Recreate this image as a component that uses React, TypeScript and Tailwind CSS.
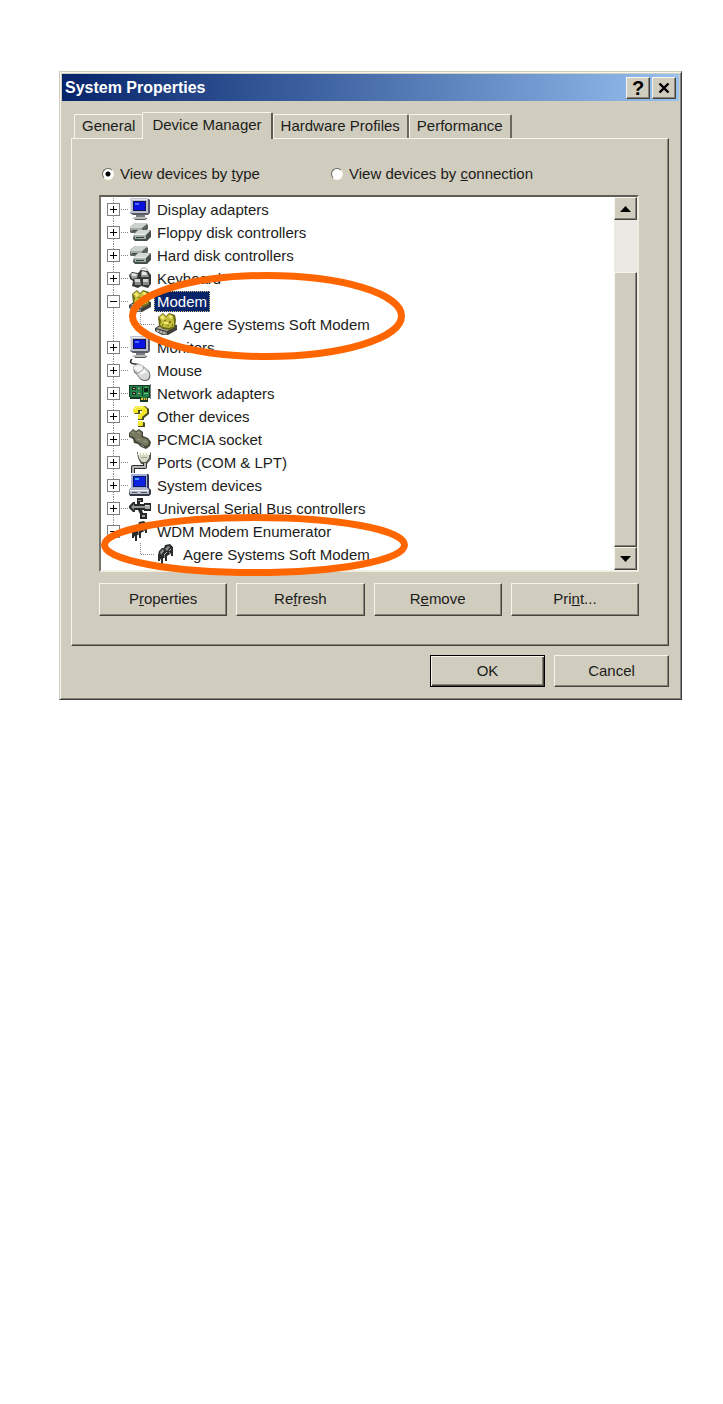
import { useState } from 'react';
import type { ReactNode } from 'react';
import clsx from 'clsx';

const raised =
  'bg-[#d0cdbf] border border-t-[#f8f6ec] border-l-[#f8f6ec] border-r-[#45433e] border-b-[#45433e] shadow-[inset_-1px_-1px_0_#868378]';

function Svg({ children }: { children: ReactNode }) {
  return (
    <svg viewBox="0 0 23 23" className="h-[23px] w-[23px] shrink-0" aria-hidden="true">
      {children}
    </svg>
  );
}

const MonitorIcon = () => (
  <Svg>
    <path d="M2 1 H20 L21 2 V15 L19 17 H4 L1 15 Z" fill="#5c5c68" />
    <path d="M1 1 L2 0 H18 L19 1 V15 H2 L1 14 Z" fill="#bcbfcd" />
    <path d="M2 1.5 H18 M1.5 2 V14" stroke="#e4e6ee" fill="none" />
    <rect x="4" y="3" width="13" height="10" fill="#15154a" />
    <rect x="5" y="4" width="11" height="8" fill="#0a12e0" />
    <path d="M6 5 H10 V7 H6 Z" fill="#4c68ff" />
    <rect x="7" y="17" width="9" height="2" fill="#7b7d83" />
    <path d="M3 20 L6 19 H16 L18 20 L16 22 H6 Z" fill="#b7bbb5" />
    <path d="M6 21.5 H16 L18 20" stroke="#555a55" fill="none" />
  </Svg>
);

const DriveIcon = () => (
  <Svg>
    <path d="M1 6 L6 2 H17 L19 4 V8 L15 12 H2 L1 11 Z" fill="#5c635f" />
    <path d="M1 6 L6 2 H17 L18 3 L13 7 H1 Z" fill="#ccd3cd" />
    <path d="M1 7 H13 V10 H2 Z" fill="#a3aca6" />
    <path d="M3 9.5 H12" stroke="#454c48" />
    <path d="M5 13 L9 9 H21 L22 10 V16 L18 20 H6 L4 18 Z" fill="#474e4a" />
    <path d="M5 13 L9 9 H20 L21 10 L17 14 H5 Z" fill="#d3d9d3" />
    <path d="M5 14 H17 V18 H6 Z" fill="#a5aea7" />
    <path d="M7 16.5 H15" stroke="#3a403c" />
    <path d="M5 13.5 H16" stroke="#eef2ee" />
    <rect x="7" y="17" width="3" height="1" fill="#5faf78" />
  </Svg>
);

const KeyboardIcon = () => (
  <Svg>
    <path d="M11 4 C12 0 18 0 19 4" stroke="#9a9a9a" fill="none" />
    <path d="M0 8 L3 5 L9 6 L12 3 L19 4 L22 8 V17 L19 21 L12 19 L9 21 L3 19 L4 14 L1 12 Z" fill="#333635" />
    <path d="M1 7 L3 6 L9 7 L8 11 L3 12 Z" fill="#9fa3a1" />
    <path d="M3 6 L8 7 L7 9 L3 9 Z" fill="#e2e4e2" />
    <path d="M12 5 L18 5 L20 10 L12 10 Z" fill="#8f9391" />
    <path d="M13 4 L17 5 L18 8 L13 8 Z" fill="#e4e6e4" />
    <path d="M5 12 L11 12 L12 18 L6 18 Z" fill="#85898a" />
    <path d="M6 12 L11 12 L11 15 L6 15 Z" fill="#d6d9d7" />
    <path d="M14 12 L20 12 L20 18 L14 18 Z" fill="#85898a" />
    <path d="M14 12 L19 12 L19 15 L14 15 Z" fill="#cdd0ce" />
  </Svg>
);

const ModemIcon = () => (
  <Svg>
    <path d="M0 15 L8 10 L22 12 V17 L13 22 H7 L0 18 Z" fill="#3f403c" />
    <path d="M1 15 L8 12 L20 14 L12 18 Z" fill="#a6a89e" />
    <path d="M1 16 L12 19 V22 L7 21 L1 18 Z" fill="#7b7d76" />
    <path d="M3 4 L8 0 L11 3 L14 0 L20 2 L21 7 L20 14 L15 17 L8 16 L4 13 Z" fill="#6b6916" />
    <path d="M4 4 L8 1 L11 4 L14 1 L18 3 L19 8 L19 13 L14 15 L8 14 L5 12 L6 8 Z" fill="#c3bd3b" />
    <path d="M5 4 L8 2 L10 5 L8 7 Z M13 3 L16 2 L18 4 L16 6 Z M9 9 H13 V11 H9 Z" fill="#efe875" />
    <path d="M9 7 H11 V8 H9 Z M14 8 H16 V10 H14 Z M7 11 H8 V13 H7 Z M12 12 H14 V13 H12 Z M17 11 H18 V13 H17 Z" fill="#7c7820" />
    <path d="M3 17 V19 M6 18 V20 M9 19 V21" stroke="#eceae4" />
  </Svg>
);

const MouseIcon = () => (
  <Svg>
    <path d="M3 0 C0 3 2 5 6 5 C9 5 10 5 10 8" stroke="#2a2a2a" strokeWidth="1.5" fill="none" />
    <path d="M4 10 C4 6 9 4 13 6 L20 12 C23 17 21 22 16 22 C12 22 10 19 8 16 L5 13 Z" fill="#5c6060" />
    <path d="M4 10 C4 6 9 4 13 6 L19 12 C22 16 20 21 16 21 C12 21 10 18 8 15 Z" fill="#d6d8d8" />
    <path d="M5 9 C6 6 10 6 12 7 L18 13 L12 16 Z" fill="#f6f6f6" />
    <path d="M7 14 C10 14 14 12 15 8" stroke="#8c8c8c" fill="none" />
  </Svg>
);

const NetworkIcon = () => (
  <Svg>
    <path d="M0 3 H22 V16 H19 V20 H11 V17 H1 V15 H0 Z" fill="#173c22" />
    <path d="M1 4 H20 V15 H18 V18 H12 V15 H1 Z" fill="#257f49" />
    <path d="M3 5 H7 V8 H3 Z M3 10 H7 V13 H3 Z" fill="#1b3325" />
    <path d="M4 6 H6 V7 H4 Z M4 11 H6 V12 H4 Z M9 6 H11 V7 H9 Z M9 11 H11 V12 H9 Z" fill="#d99c8e" />
    <path d="M13 4 H14 V14 H13 Z" fill="#143a20" />
    <path d="M15 6 H19 V10 H15 Z" fill="#14231a" />
    <path d="M16 5 H18 V6 H16 Z M15 11 H19 V12 H15 Z" fill="#6ad182" />
    <path d="M12 16 H18 V18 H12 Z" fill="#dfc83f" />
    <path d="M14.5 16 V18 M16.5 16 V18" stroke="#54601c" />
    <path d="M21.5 2 V17" stroke="#77807a" />
  </Svg>
);

const QuestionIcon = () => (
  <Svg>
    <path d="M5 8 V5 L8 1 H16 L20 4 V9 L15 13 V15 H9 V11 L14 8 V6 H11 V9 H6 Z M9 17 H15 L16 18 V22 H9 Z" fill="#4b4920" />
    <path d="M4 7 V4 L7 1 H15 L18 4 V8 L13 12 V14 H9 V10 L13 7 V5 H9 V8 H5 Z" fill="#f1e72a" />
    <path d="M9 16 H13 L14 17 V20 L13 21 H9 Z" fill="#f1e72a" />
    <path d="M5 5 L8 2 H14 M10 17 H12" stroke="#fffba4" fill="none" />
  </Svg>
);

const CardIcon = () => (
  <Svg>
    <path d="M0 5 L4 1 L7 3 L10 1 L14 4 L14 8 L19 10 L22 14 L21 18 L17 21 L12 19 L9 16 L5 15 L4 11 L0 9 Z" fill="#45463a" />
    <path d="M1 5 L4 2 L7 4 L10 2 L13 5 L12 9 L18 11 L20 14 L19 17 L16 18 L11 15 L7 13 L5 9 L1 8 Z" fill="#777a60" />
    <path d="M3 4 L5 5 M9 5 L11 4 M8 11 L12 12 M14 13 L18 14" stroke="#9a9c7e" />
    <path d="M12 17 L15 19" stroke="#98998f" />
  </Svg>
);

const PortIcon = () => (
  <Svg>
    <path d="M8 1 H21 L22 2 V8 L18 13 H12 L9 7 Z" fill="#55584f" />
    <path d="M9 2 H20 V7 L17 11 H13 L10 7 Z" fill="#d8dac6" />
    <path d="M9 1 H21 V4 H9 Z" fill="#fafbec" />
    <path d="M11 3 H12 M14 3 H15 M17 3 H18 M12 6.5 H18" stroke="#a3a58e" />
    <path d="M16 12 V16 H4 V22" stroke="#2d2d2d" strokeWidth="4" strokeLinejoin="round" fill="none" />
    <path d="M16 12 V16 H4 V22" stroke="#b5b8b2" strokeWidth="2" strokeLinejoin="round" fill="none" />
  </Svg>
);

const ComputerIcon = () => (
  <Svg>
    <path d="M3 0 H19 L20 1 V15 H3 Z" fill="#30375a" />
    <path d="M2 0 H18 V14 H2 Z" fill="#a4afd6" />
    <rect x="4" y="2" width="13" height="11" fill="#101960" />
    <rect x="5" y="3" width="11" height="9" fill="#0c23df" />
    <rect x="6" y="4" width="4" height="2" fill="#45a3ff" />
    <path d="M0 16 L2 14 H20 L22 16 V20 L20 22 H1 L0 20 Z" fill="#343746" />
    <path d="M0 16 L2 14 H19 L20 16 V20 H1 Z" fill="#b7bccd" />
    <path d="M3 18.5 H8 M12 18.5 H18" stroke="#535869" />
    <path d="M1 16.5 H20" stroke="#f1f2f6" />
  </Svg>
);

const UsbIcon = () => (
  <Svg>
    <path d="M8 1 H14 V5 H11 V7 H15 V6 H22 V14 H15 V13 H13 L14 16 H18 V22 H11 V17 L9 13 H6 V15 H4 L0 11 V9 L4 5 H6 V7 H8 Z" fill="#262928" />
    <path d="M2 10 L5 7 V9 H16 V11 H5 V13 Z" fill="#929694" />
    <rect x="16" y="8" width="5" height="4" fill="#a5a9a7" />
    <rect x="16" y="8" width="4" height="1" fill="#e3e5e3" />
    <rect x="13" y="18" width="3" height="2" fill="#a0a4a2" />
    <rect x="9" y="3" width="3" height="1" fill="#8b8f8d" />
  </Svg>
);

const ChipIcon = () => (
  <Svg>
    <path d="M3 12 L4 8 L7 5 L9 5 L10 2 L15 1 L18 4 V9 L12 13 L7 16 L3 17 Z" fill="#2b2d2c" />
    <path d="M5 9 L8 6 L9 8 L6 12 Z M10 6 L13 3 L15 4 L12 8 Z" fill="#8c908e" />
    <path d="M9 12 L12 9 M14 8 L16 6" stroke="#b5b8b6" />
    <path d="M4 13 V18 M7 14 V21 M11 12 V18 M17 7 V13" stroke="#2b2d2c" strokeWidth="2" />
    <path d="M9.5 12 V15 M14.5 9 V12" stroke="#77797a" />
  </Svg>
);

type Device = {
  name: string;
  icon: () => ReactNode;
  open?: boolean;
  child?: boolean;
  last?: boolean;
};

const devices: Device[] = [
  { name: 'Display adapters', icon: MonitorIcon },
  { name: 'Floppy disk controllers', icon: DriveIcon },
  { name: 'Hard disk controllers', icon: DriveIcon },
  { name: 'Keyboard', icon: KeyboardIcon },
  { name: 'Modem', icon: ModemIcon, open: true },
  { name: 'Agere Systems Soft Modem', icon: ModemIcon, child: true },
  { name: 'Monitors', icon: MonitorIcon },
  { name: 'Mouse', icon: MouseIcon },
  { name: 'Network adapters', icon: NetworkIcon },
  { name: 'Other devices', icon: QuestionIcon },
  { name: 'PCMCIA socket', icon: CardIcon },
  { name: 'Ports (COM & LPT)', icon: PortIcon },
  { name: 'System devices', icon: ComputerIcon },
  { name: 'Universal Serial Bus controllers', icon: UsbIcon },
  { name: 'WDM Modem Enumerator', icon: ChipIcon, open: true, last: true },
  { name: 'Agere Systems Soft Modem', icon: ChipIcon, child: true, last: true },
];

function TreeRow({ device, selected, onSelect }: { device: Device; selected: boolean; onSelect: () => void }) {
  const Icon = device.icon;
  return (
    <li className="flex h-[23px] items-center">
      {device.child ? (
        <svg width="54" height="23" className="shrink-0" stroke="#8a8a8a" strokeDasharray="1 1" aria-hidden="true">
          {!device.last && <path d="M12.5 0 V23" />}
          <path d="M39.5 0 V12 M40 11.5 H54" fill="none" />
        </svg>
      ) : (
        <button type="button" aria-label={`${device.open ? 'Collapse' : 'Expand'} ${device.name}`} className="shrink-0">
          <svg width="28" height="23" className="block" aria-hidden="true">
            <path d={device.last ? 'M12.5 0 V6' : 'M12.5 0 V23'} stroke="#8a8a8a" strokeDasharray="1 1" />
            <path d="M18 11.5 H28" stroke="#8a8a8a" strokeDasharray="1 1" />
            <rect x="6.5" y="5.5" width="12" height="12" fill="#fff" stroke="#808080" />
            <path d={device.open ? 'M9 11.5 H16' : 'M9 11.5 H16 M12.5 8 V15'} stroke="#000" />
          </svg>
        </button>
      )}
      <Icon />
      <button
        type="button"
        onClick={onSelect}
        className={clsx(
          'ml-0.5 h-[21px] px-[3px] leading-[21px] whitespace-nowrap',
          selected && 'bg-[#0a246a] text-white outline-1 -outline-offset-1 outline-dotted outline-[#d8c98a]'
        )}
      >
        {device.name}
      </button>
    </li>
  );
}

const tabs = ['General', 'Device Manager', 'Hardware Profiles', 'Performance'];

const actions = [
  { id: 'properties', label: <>P<u>r</u>operties</> },
  { id: 'refresh', label: <>Re<u>f</u>resh</> },
  { id: 'remove', label: <>R<u>e</u>move</> },
  { id: 'print', label: <>Pri<u>n</u>t...</> },
];

const radio =
  'size-3 shrink-0 appearance-none rounded-full border border-t-[#6b695f] border-l-[#6b695f] border-r-[#f8f6ec] border-b-[#f8f6ec] bg-white checked:bg-[radial-gradient(circle,#000_2px,#fff_3px)]';

export default function App() {
  const [tab, setTab] = useState('Device Manager');
  const [selected, setSelected] = useState(4);

  return (
    <main className="min-h-screen bg-white pt-[71px] pr-[41px] pl-[59px] font-['Liberation_Sans',Arial,sans-serif] text-[15px] text-[#1c1c1a]">
      <section className="border border-t-[#d0cdbf] border-r-[#3c3b40] border-b-[#3c3b40] border-l-[#d0cdbf] bg-[#d0cdbf] p-0.5 shadow-[inset_1px_1px_0_#f8f6ec,inset_-1px_-1px_0_#868378]">
        {/* Title bar */}
        <header className="flex h-[27px] items-center gap-0.5 bg-linear-to-r from-[#08246b] to-[#98c0f0] pr-[3px] pl-[3px]">
          <h1 className="flex-1 text-base font-bold text-white">System Properties</h1>
          <button type="button" aria-label="Help" className={clsx(raised, 'flex h-[22px] w-6 items-center justify-center text-xl font-bold text-black')}>
            ?
          </button>
          <button type="button" aria-label="Close" className={clsx(raised, 'flex h-[22px] w-6 items-center justify-center')}>
            <svg width="12" height="10" viewBox="0 0 12 10" aria-hidden="true">
              <path d="M1.5 0.5 L10.5 9.5 M10.5 0.5 L1.5 9.5" stroke="#000" strokeWidth="2.4" />
            </svg>
          </button>
        </header>

        <div className="pt-[11px] pr-[10px] pb-[10px] pl-[9px]">
          {/* Tabs */}
          <div role="tablist" className="flex h-[26px] items-end pl-[3px]">
            {tabs.map((name) => (
              <button
                key={name}
                type="button"
                role="tab"
                aria-selected={tab === name}
                onClick={() => setTab(name)}
                className={clsx(
                  'rounded-t-xs border-t border-l border-[#f8f6ec] whitespace-nowrap',
                  tab === name
                    ? 'relative -mb-px h-[27px] border-r-2 border-r-[#5b5950] bg-[#d0cdbf] px-[9px] pb-0.5'
                    : 'h-6 px-[7px]',
                  (name === 'Hardware Profiles' || name === 'Performance') && tab !== name && 'border-r-2 border-r-[#6b695f]'
                )}
              >
                {name}
              </button>
            ))}
          </div>

          {/* Device Manager page */}
          <div className="border border-t-[#f8f6ec] border-r-[#45433e] border-b-[#45433e] border-l-[#f8f6ec] pt-[25px] pr-[29px] pb-[29px] pl-[27px] shadow-[inset_-1px_-1px_0_#868378]">
            <div className="flex h-5 items-center pl-[3px]">
              <label className="flex w-[229px] items-center gap-1.5">
                <input type="radio" name="view" defaultChecked className={radio} />
                <span>View devices by <u>t</u>ype</span>
              </label>
              <label className="flex items-center gap-1.5">
                <input type="radio" name="view" className={radio} />
                <span>View devices by <u>c</u>onnection</span>
              </label>
            </div>

            <div className="relative mt-[11px] flex border-2 border-t-[#5f5d55] border-r-[#f0eee2] border-b-[#f0eee2] border-l-[#77756b] bg-white">
              <ul className="min-w-0 flex-1 pt-px pb-1">
                {devices.map((device, i) => (
                  <TreeRow key={i} device={device} selected={selected === i} onSelect={() => setSelected(i)} />
                ))}
              </ul>
              <div className="flex w-[23px] flex-col bg-[#ebe9e3]">
                <button type="button" aria-label="Scroll up" className={clsx(raised, 'flex h-[23px] items-center justify-center')}>
                  <svg width="11" height="6" aria-hidden="true">
                    <path d="M0 6 L5.5 0 L11 6 Z" />
                  </svg>
                </button>
                <div className="h-[52px]" />
                <div className={clsx(raised, 'flex-1')} />
                <button type="button" aria-label="Scroll down" className={clsx(raised, 'flex h-[23px] items-center justify-center')}>
                  <svg width="11" height="6" aria-hidden="true">
                    <path d="M0 0 L5.5 6 L11 0 Z" />
                  </svg>
                </button>
              </div>

              {/* Markers around both modem entries */}
              <svg width="276" height="88" className="pointer-events-none absolute top-[75px] left-7" aria-hidden="true">
                <ellipse cx="138" cy="44" rx="134.5" ry="40.5" fill="none" stroke="#ff6600" strokeWidth="7" />
              </svg>
              <svg width="307" height="62" className="pointer-events-none absolute top-[317px] left-0" aria-hidden="true">
                <ellipse cx="153.5" cy="31" rx="150" ry="27.5" fill="none" stroke="#ff6600" strokeWidth="7" />
              </svg>
            </div>

            <div className="mt-[11px] grid grid-cols-4 gap-[9px]">
              {actions.map((action) => (
                <button key={action.id} type="button" className={clsx(raised, 'h-[33px]')}>
                  {action.label}
                </button>
              ))}
            </div>
          </div>

          {/* Footer */}
          <div className="mt-[9px] flex justify-end gap-[9px]">
            <button type="button" className="h-8 w-[115px] border border-black bg-[#d0cdbf] shadow-[inset_1px_1px_0_#f8f6ec,inset_-1px_-1px_0_#45433e,inset_-2px_-2px_0_#868378]">
              OK
            </button>
            <button type="button" className={clsx(raised, 'h-8 w-[115px]')}>
              Cancel
            </button>
          </div>
        </div>
      </section>
    </main>
  );
}
